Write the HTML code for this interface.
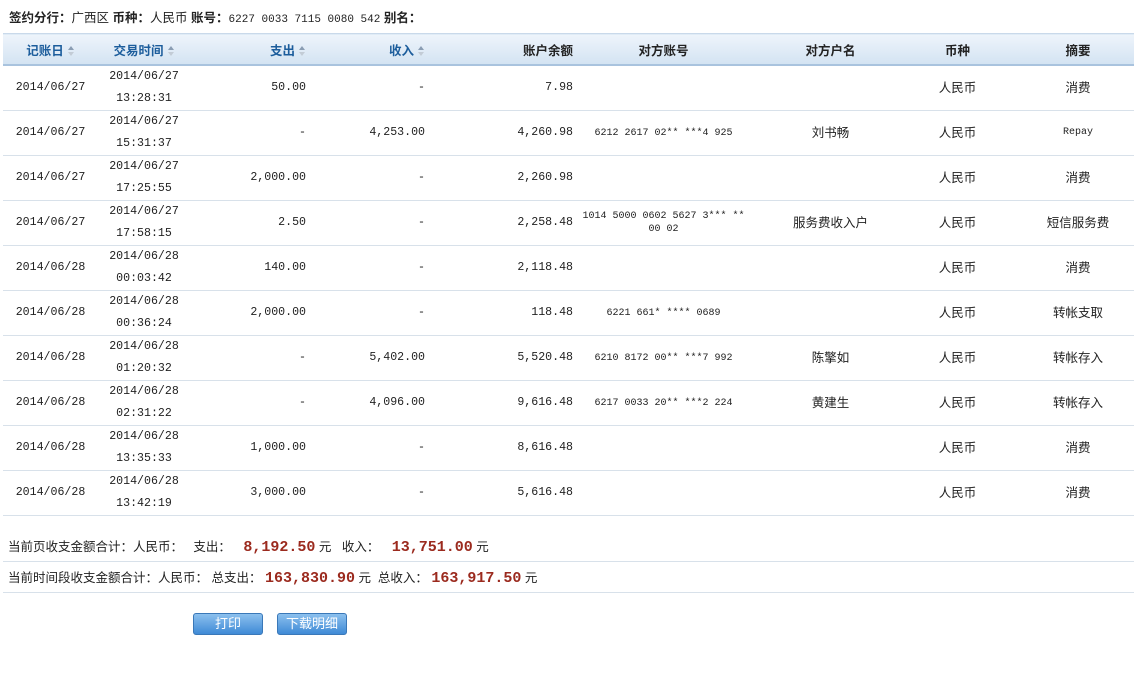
<!DOCTYPE html>
<html><head><meta charset="utf-8"><style>
body{margin:0;width:1134px;height:675px;background:#fff;font-family:"Liberation Sans","Noto Sans CJK SC",sans-serif;font-size:12px;color:#222;position:relative;overflow:hidden}
.top{position:absolute;left:9px;top:7px;font-size:12.5px}
.top b{font-weight:bold}
.mono{font-family:"Liberation Mono","Noto Sans CJK SC",monospace;font-size:11.6px}
table{position:absolute;left:3px;top:33px;border-collapse:collapse;table-layout:fixed;width:1131px}
th{height:30px;padding:0;font-size:12.5px;font-weight:bold;color:#222;background:linear-gradient(#eef4fb,#d3e3f2);border-top:1px solid #c9d9ea;border-bottom:2px solid #a9c3de}
th.s{color:#1c5d9c}
.ar{display:inline-block;vertical-align:middle;margin-left:4px;width:7px;height:10px;position:relative}
.ar:before{content:"";position:absolute;left:0;top:0;border-left:3.5px solid transparent;border-right:3.5px solid transparent;border-bottom:4px solid #8a9db3}
.ar:after{content:"";position:absolute;left:0;top:6px;border-left:3.5px solid transparent;border-right:3.5px solid transparent;border-top:4px solid #c3ccd6}
td{height:44px;padding:0;border-bottom:1px solid #d8e1ea;text-align:center;font-family:"Liberation Mono","Noto Sans CJK SC",monospace;font-size:11.6px;line-height:22px}
td.r{text-align:right;padding-right:8px}
td.c{font-family:"Liberation Sans","Noto Sans CJK SC",sans-serif;font-size:12.5px}
td.a{font-size:10px;line-height:13px;white-space:nowrap}
.sum{position:absolute;left:8px;font-size:12.5px}
.red{color:#9b2a1e;font-family:"Liberation Mono",monospace;font-weight:bold;font-size:15px}
.hr{position:absolute;left:3px;width:1131px;height:1px;background:#d8e1ea}
.btn{position:absolute;top:613px;height:20px;border:1px solid #3a78b8;border-radius:3px;background:linear-gradient(#8cc0ee,#3f8ad6);color:#fff;font-size:13px;text-align:center;line-height:20px}
</style></head><body>
<div class="top"><b>签约分行：</b>广西区 <b>币种：</b>人民币 <b>账号：</b><span class="mono" style="font-size:11px">6227 0033 7115 0080 542</span> <b>别名：</b></div>
<table>
<colgroup><col style="width:95px"><col style="width:92px"><col style="width:124px"><col style="width:119px"><col style="width:148px"><col style="width:165px"><col style="width:169px"><col style="width:85px"><col style="width:134px"></colgroup>
<tr><th class="s">记账日<span class="ar"></span></th><th class="s">交易时间<span class="ar"></span></th><th class="s" style="text-align:right;padding-right:8px">支出<span class="ar"></span></th><th class="s" style="text-align:right;padding-right:8px">收入<span class="ar"></span></th><th style="text-align:right;padding-right:8px">账户余额</th><th>对方账号</th><th>对方户名</th><th>币种</th><th style="padding-left:22px">摘要</th></tr>
<tr><td>2014/06/27</td><td>2014/06/27<br>13:28:31</td><td class="r">50.00</td><td class="r">-</td><td class="r">7.98</td><td class="a"></td><td class="c"></td><td class="c">人民币</td><td class="c" style="padding-left:22px">消费</td></tr>
<tr><td>2014/06/27</td><td>2014/06/27<br>15:31:37</td><td class="r">-</td><td class="r">4,253.00</td><td class="r">4,260.98</td><td class="a">6212 2617 02** ***4 925</td><td class="c">刘书畅</td><td class="c">人民币</td><td style="padding-left:22px;font-size:10px">Repay</td></tr>
<tr><td>2014/06/27</td><td>2014/06/27<br>17:25:55</td><td class="r">2,000.00</td><td class="r">-</td><td class="r">2,260.98</td><td class="a"></td><td class="c"></td><td class="c">人民币</td><td class="c" style="padding-left:22px">消费</td></tr>
<tr><td>2014/06/27</td><td>2014/06/27<br>17:58:15</td><td class="r">2.50</td><td class="r">-</td><td class="r">2,258.48</td><td class="a">1014 5000 0602 5627 3*** **<br>00 02</td><td class="c">服务费收入户</td><td class="c">人民币</td><td class="c" style="padding-left:22px">短信服务费</td></tr>
<tr><td>2014/06/28</td><td>2014/06/28<br>00:03:42</td><td class="r">140.00</td><td class="r">-</td><td class="r">2,118.48</td><td class="a"></td><td class="c"></td><td class="c">人民币</td><td class="c" style="padding-left:22px">消费</td></tr>
<tr><td>2014/06/28</td><td>2014/06/28<br>00:36:24</td><td class="r">2,000.00</td><td class="r">-</td><td class="r">118.48</td><td class="a">6221 661* **** 0689</td><td class="c"></td><td class="c">人民币</td><td class="c" style="padding-left:22px">转帐支取</td></tr>
<tr><td>2014/06/28</td><td>2014/06/28<br>01:20:32</td><td class="r">-</td><td class="r">5,402.00</td><td class="r">5,520.48</td><td class="a">6210 8172 00** ***7 992</td><td class="c">陈擎如</td><td class="c">人民币</td><td class="c" style="padding-left:22px">转帐存入</td></tr>
<tr><td>2014/06/28</td><td>2014/06/28<br>02:31:22</td><td class="r">-</td><td class="r">4,096.00</td><td class="r">9,616.48</td><td class="a">6217 0033 20** ***2 224</td><td class="c">黄建生</td><td class="c">人民币</td><td class="c" style="padding-left:22px">转帐存入</td></tr>
<tr><td>2014/06/28</td><td>2014/06/28<br>13:35:33</td><td class="r">1,000.00</td><td class="r">-</td><td class="r">8,616.48</td><td class="a"></td><td class="c"></td><td class="c">人民币</td><td class="c" style="padding-left:22px">消费</td></tr>
<tr><td>2014/06/28</td><td>2014/06/28<br>13:42:19</td><td class="r">3,000.00</td><td class="r">-</td><td class="r">5,616.48</td><td class="a"></td><td class="c"></td><td class="c">人民币</td><td class="c" style="padding-left:22px">消费</td></tr>
</table>
<div class="sum" style="top:536px">当前页收支金额合计：人民币： &nbsp; 支出： <span class="red">&nbsp;8,192.50</span> 元 &nbsp; 收入： <span class="red">&nbsp;13,751.00</span> 元</div>
<div class="hr" style="top:561px"></div>
<div class="sum" style="top:567px">当前时间段收支金额合计：人民币： 总支出： <span class="red">163,830.90</span> 元 &nbsp;总收入： <span class="red">163,917.50</span> 元</div>
<div class="hr" style="top:592px"></div>
<div class="btn" style="left:193px;width:68px">打印</div>
<div class="btn" style="left:277px;width:68px">下载明细</div>
</body></html>
